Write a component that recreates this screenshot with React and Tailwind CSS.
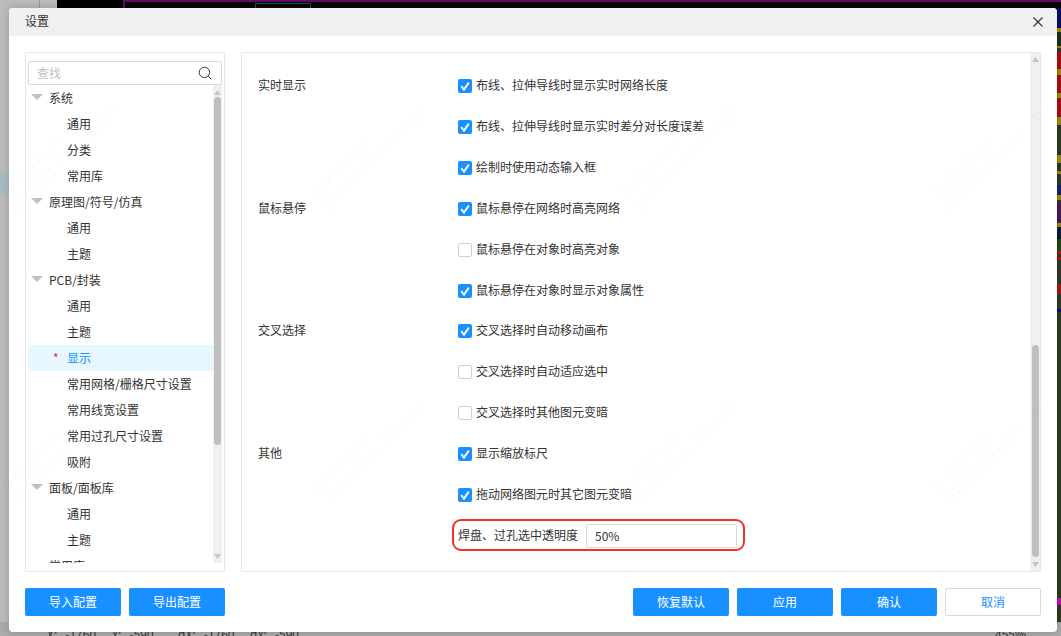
import React from "react";

const tree = [
  { t: "系统", g: 1 }, { t: "通用" }, { t: "分类" }, { t: "常用库" },
  { t: "原理图/符号/仿真", g: 1 }, { t: "通用" }, { t: "主题" },
  { t: "PCB/封装", g: 1 }, { t: "通用" }, { t: "主题" }, { t: "显示", sel: 1 },
  { t: "常用网格/栅格尺寸设置" }, { t: "常用线宽设置" }, { t: "常用过孔尺寸设置" }, { t: "吸附" },
  { t: "面板/面板库", g: 1 }, { t: "通用" }, { t: "主题" }, { t: "常用库", g: 2 },
];

const rows = [
  { s: "实时显示", t: "布线、拉伸导线时显示实时网络长度", c: 1 },
  { t: "布线、拉伸导线时显示实时差分对长度误差", c: 1 },
  { t: "绘制时使用动态输入框", c: 1 },
  { s: "鼠标悬停", t: "鼠标悬停在网络时高亮网络", c: 1 },
  { t: "鼠标悬停在对象时高亮对象", c: 0 },
  { t: "鼠标悬停在对象时显示对象属性", c: 1 },
  { s: "交叉选择", t: "交叉选择时自动移动画布", c: 1 },
  { t: "交叉选择时自动适应选中", c: 0 },
  { t: "交叉选择时其他图元变暗", c: 0 },
  { s: "其他", t: "显示缩放标尺", c: 1 },
  { t: "拖动网络图元时其它图元变暗", c: 1 },
];

const marks = [
  [-11, 134], [299, 134], [609, 134], [919, 134],
  [-11, 428], [299, 428], [609, 428], [919, 428],
];

function Box({ on }) {
  if (!on) return <span className="block w-[14px] h-[14px] rounded-[2px] border border-[#d0d0d0] bg-white shrink-0" />;
  return (
    <span className="flex items-center justify-center w-[14px] h-[14px] rounded-[2px] bg-[#1890ff] shrink-0">
      <svg width="14" height="14" viewBox="0 0 14 14" fill="none">
        <path d="M3.2 7.2 L6 10.6 L10.8 3.6" stroke="#fff" strokeWidth="2" />
      </svg>
    </span>
  );
}

function Up() {
  return <svg width="7" height="5" viewBox="0 0 7 5"><path d="M3.5 0 L7 5 L0 5 Z" fill="#c4c4c4" /></svg>;
}
function Down() {
  return <svg width="7" height="5" viewBox="0 0 7 5"><path d="M0 0 L7 0 L3.5 5 Z" fill="#c4c4c4" /></svg>;
}

function Btn({ children, ghost }) {
  return (
    <button className={ghost
      ? "w-[96px] h-[28px] rounded-[2px] border border-[#d9d9d9] bg-white text-[#1890ff] text-[12px]"
      : "w-[96px] h-[28px] rounded-[2px] bg-[#1890ff] text-white text-[12px]"}>
      {children}
    </button>
  );
}

export default function App() {
  return (
    <div className="relative w-[1061px] h-[636px] overflow-hidden flex flex-col bg-[#b8b8b8] text-[#333] text-[12px] font-['Noto_Sans_CJK_SC','Noto_Sans',sans-serif]">
      {/* dimmed application behind the dialog */}
      <div className="flex-1 flex min-h-0">
        <div className="w-[57px] bg-[#bcbcbc] relative">
          <div className="absolute left-[39px] top-0 w-px h-[10px] bg-[#999]" />
          <div className="absolute left-0 top-[172px] w-[10px] h-[23px] bg-[#a9bcc4]" />
        </div>
        <div className="flex-1 bg-black relative">
          <div className="absolute left-[66px] top-0 right-0 h-[2px] bg-[#640a64]" />
          <div className="absolute left-[66px] top-0 w-[2px] h-[10px] bg-[#640a64]" />
          <div className="absolute left-[198px] top-[3px] w-[56px] h-[10px] border border-[#0d5a58]" />
          <div className="absolute right-0 top-[8px] bottom-0 w-[4px] flex flex-col bg-[#2e3a22]">
            <div className="h-[20px] bg-[#0a0a70]" />
            <div className="h-[4px] bg-[#a08a10]" />
            <div className="h-[14px] bg-[#1c3018]" />
            <div className="h-[2px] bg-[#a08a10]" />
            <div className="h-[4px]" />
            <div className="h-[17px] bg-[#b00d0d]" />
            <div className="h-[6px] bg-[#a08a10]" />
            <div className="h-[18px] bg-[#b00d0d]" />
            <div className="h-[5px] bg-[#a08a10]" />
            <div className="h-[19px] bg-[#b00d0d]" />
            <div className="h-[8px] bg-[#a08a10]" />
            <div className="h-[30px]" />
            <div className="h-[8px] bg-[#a08a10]" />
            <div className="h-[8px]" />
            <div className="h-[3px] bg-[#a08a10]" />
            <div className="h-[11px]" />
            <div className="h-[10px] bg-[#16206e]" />
            <div className="h-[5px] bg-[#a08a10]" />
            <div className="h-[3px]" />
            <div className="h-[20px] bg-[#4a1a5a]" />
            <div className="h-[4px] bg-[#a08a10]" />
            <div className="h-[12px] bg-[#0a1a3a]" />
            <div className="h-[12px] bg-[#1a4a14]" />
            <div className="h-[3px] bg-[#c01010]" />
            <div className="h-[3px]" />
            <div className="h-[3px] bg-[#c01010]" />
            <div className="h-[24px]" />
            <div className="h-[10px] bg-[#a81818]" />
            <div className="h-[15px]" />
            <div className="h-[3px] bg-[#10107a]" />
            <div className="h-[286px]" />
            <div className="h-[7px] bg-[#c010b0]" />
            <div className="h-[6px] bg-[#333]" />
          </div>
        </div>
      </div>
      <div className="h-[14px] bg-[#ababab] flex pl-[47px] pt-[4px] text-[#333] leading-[16px] whitespace-pre relative">
        <span className="w-[65px]">X:   -1760</span>
        <span className="w-[66px]">Y:   -590</span>
        <span className="w-[72px]">dX:   -1760</span>
        <span>dY:   -590</span>
        <span className="absolute left-[995px] top-[4px]">455%</span>
      </div>

      {/* dialog */}
      <div className="absolute left-[9px] top-[8px] w-[1048px] h-[624px] bg-white rounded-[4px] shadow-[0_0_10px_rgba(0,0,0,0.18)] flex flex-col overflow-hidden">
        <div className="h-[28px] bg-[#f0f0f0] flex items-center justify-between pl-[16px] pr-[14px] shrink-0">
          <span className="text-[12px] pb-[2px]">设置</span>
          <svg width="10" height="10" viewBox="0 0 10 10" fill="none">
            <path d="M0.5 0.5 L9.5 9.5 M9.5 0.5 L0.5 9.5" stroke="#333" strokeWidth="1.1" />
          </svg>
        </div>

        <div className="flex gap-[16px] px-[16px] pt-[16px] h-[536px] shrink-0">
          {/* left */}
          <div className="w-[200px] h-[520px] border border-[#e8e8e8] flex flex-col px-[2px] pt-[8px]">
            <div className="h-[24px] border border-[#d9d9d9] rounded-[2px] flex items-center justify-between pl-[8px] pr-[9px] shrink-0">
              <span className="text-[#bfbfbf]">查找</span>
              <svg width="14" height="14" viewBox="0 0 14 14" fill="none">
                <circle cx="6.4" cy="6.4" r="5.2" stroke="#333" strokeWidth="1" />
                <path d="M10.2 10.2 L13 13" stroke="#333" strokeWidth="1" />
              </svg>
            </div>
            <div className="flex h-[478px] overflow-hidden">
              <div className="w-[185px] overflow-hidden">
                {tree.map((r, i) => (
                  <div key={i} className={"h-[26px] flex items-center shrink-0 whitespace-nowrap " + (r.sel ? "bg-[#e6f7ff] text-[#1890ff]" : "")}>
                    {r.g === 1 ? (
                      <>
                        <svg className="ml-[3px] mr-[6px] mb-[2px]" width="12" height="6" viewBox="0 0 12 6"><path d="M0 0 L12 0 L6 6 Z" fill="#bfbfbf" /></svg>
                        <span>{r.t}</span>
                      </>
                    ) : r.g === 2 ? (
                      <span className="ml-[21px]">{r.t}</span>
                    ) : r.sel ? (
                      <>
                        <span className="ml-[25px] w-[14px] text-[#f5222d]">*</span>
                        <span>{r.t}</span>
                      </>
                    ) : (
                      <span className="ml-[39px]">{r.t}</span>
                    )}
                  </div>
                ))}
              </div>
              <div className="w-[9px] bg-[#f0f0f0] flex flex-col items-center pt-[5px]">
                <Up />
                <div className="w-[7px] h-[348px] mt-[2px] rounded-full bg-[#bfbfbf]" />
                <div className="flex-1" />
                <div className="mb-[4px]"><Down /></div>
              </div>
            </div>
          </div>

          {/* right */}
          <div className="relative w-[800px] h-[520px] border border-[#e8e8e8] flex overflow-hidden">
            <div className="flex-1 pl-[16px] pt-[12.9px]">
              {rows.map((r, i) => (
                <div key={i} className="h-[40.85px] flex items-center">
                  <span className="w-[200px] shrink-0 pb-[2px]">{r.s}</span>
                  <Box on={r.c} />
                  <span className="ml-[4px] pb-[2px]">{r.t}</span>
                </div>
              ))}
              <div className="relative h-[40.85px] flex items-center pl-[200px]">
                <span className="w-[128px] shrink-0 pb-[2px]">焊盘、过孔选中透明度</span>
                <div className="w-[151px] h-[24px] border border-[#d9d9d9] rounded-[2px] flex items-center pl-[8px]">50%</div>
                <div className="absolute left-[194px] top-[4px] w-[293px] h-[32px] border-2 border-[#f5302a] rounded-[9px]" />
              </div>
            </div>
            <div className="w-[10px] bg-[#f0f0f0] flex flex-col items-center pt-[4px] shrink-0">
              <Up />
              <div className="flex-1" />
              <div className="w-[7px] h-[212px] rounded-full bg-[#bfbfbf]" />
              <div className="mt-[5px] mb-[4px]"><Down /></div>
            </div>
          </div>
        </div>

        <div className="flex justify-between px-[16px] pt-[16px]">
          <div className="flex gap-[8px]">
            <Btn>导入配置</Btn>
            <Btn>导出配置</Btn>
          </div>
          <div className="flex gap-[8px]">
            <Btn>恢复默认</Btn>
            <Btn>应用</Btn>
            <Btn>确认</Btn>
            <Btn ghost>取消</Btn>
          </div>
        </div>
      </div>

      {/* watermark over everything */}
      {marks.map(([x, y], i) => (
        <div
          key={i}
          className="absolute -rotate-45 pointer-events-none text-[15px] leading-[18px] text-[rgba(0,0,0,0.03)] whitespace-nowrap font-['Liberation_Sans',sans-serif]"
          style={{ left: x, top: y }}
        >
          <div>ZouYuXuan</div>
          <div>2026-01-06 14:58:19</div>
        </div>
      ))}
    </div>
  );
}
